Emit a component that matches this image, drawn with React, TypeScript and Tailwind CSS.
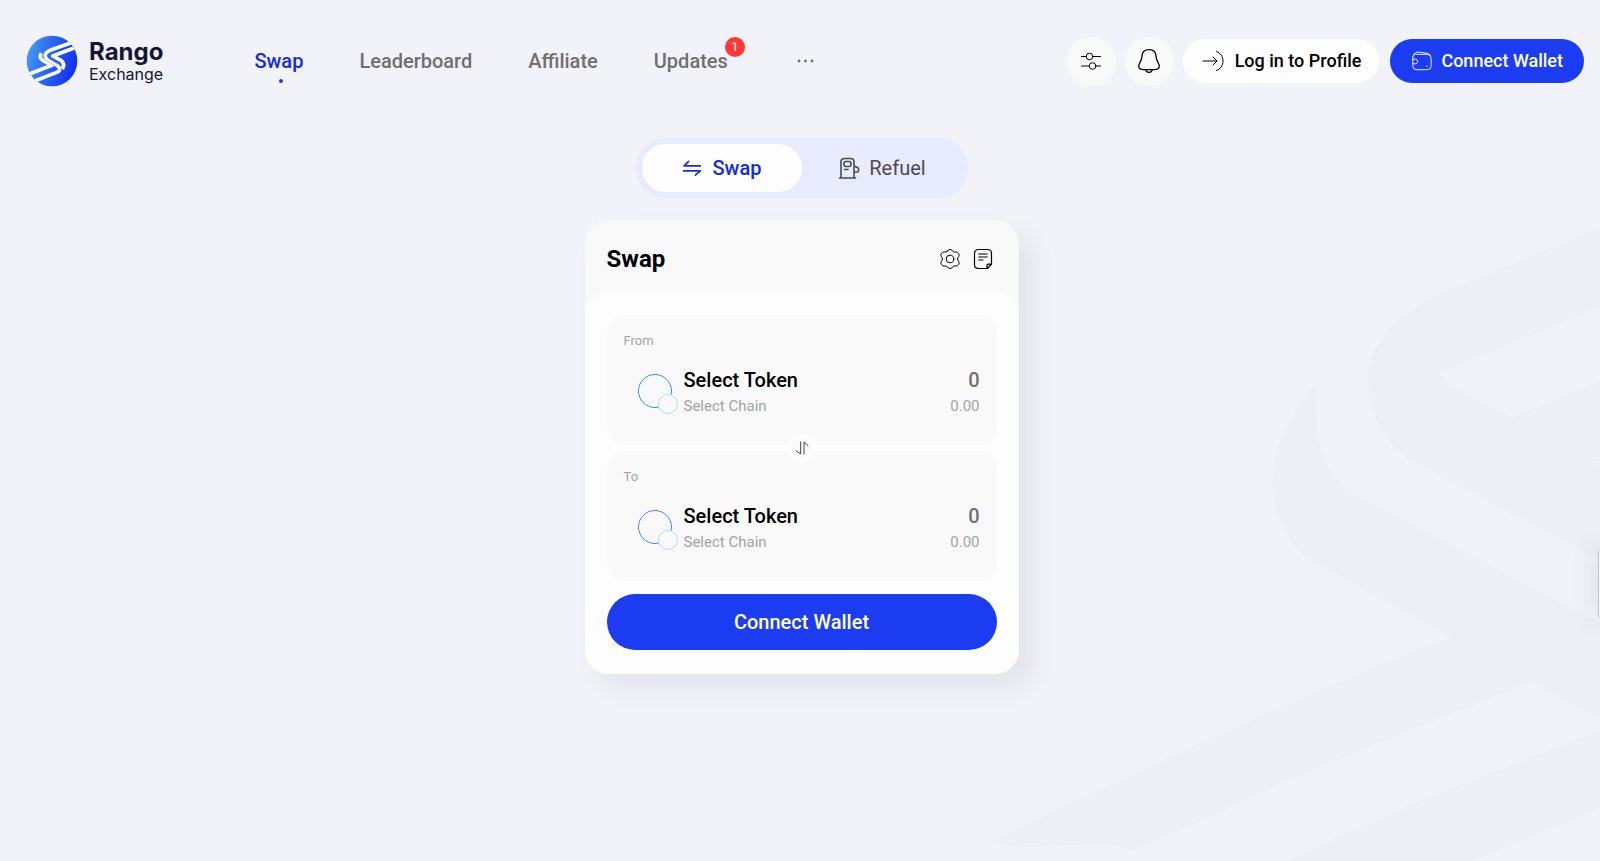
import { useState } from 'react';
import type { ReactNode } from 'react';

interface TokenPanelProps {
  id: string;
  label: string;
  amount: string;
  onAmountChange?: (value: string) => void;
}

const navLinks = [
  { id: 'swap', name: 'Swap', active: true },
  { id: 'leaderboard', name: 'Leaderboard' },
  { id: 'affiliate', name: 'Affiliate' },
  { id: 'updates', name: 'Updates', badge: 1 },
];

function Icon({ size = 24, width = 1, children }: { size?: number; width?: number; children: ReactNode }) {
  return (
    <svg
      width={size}
      height={size}
      viewBox="0 0 24 24"
      fill="none"
      stroke="currentColor"
      strokeWidth={width}
      strokeLinecap="round"
      strokeLinejoin="round"
      aria-hidden="true"
      className="shrink-0"
    >
      {children}
    </svg>
  );
}

function LogoMark() {
  return (
    <svg width="52" height="52" viewBox="0 0 156 156" aria-hidden="true">
      <defs>
        <linearGradient id="logo-fill" x1="0" y1="0" x2="1" y2="0.25">
          <stop offset="0" stopColor="#4aa5f7" />
          <stop offset="0.5" stopColor="#2a68f5" />
          <stop offset="1" stopColor="#1436f0" />
        </linearGradient>
        <linearGradient id="logo-fold" x1="0" y1="0" x2="1" y2="1">
          <stop offset="0" stopColor="#dfe5f0" />
          <stop offset="0.35" stopColor="#ffffff" />
          <stop offset="1" stopColor="#ffffff" />
        </linearGradient>
        <clipPath id="logo-clip">
          <circle cx="78" cy="78" r="76" />
        </clipPath>
      </defs>
      <circle cx="78" cy="78" r="76" fill="url(#logo-fill)" />
      <g clipPath="url(#logo-clip)" fill="none" strokeLinejoin="round">
        <path d="M10 117 70 94 78 91 50 76Q38 68 46 55" stroke="#ffffff" strokeWidth="11" />
        <path d="M146 38 88 60 80 63 106 77Q118 86 109 102" stroke="#ffffff" strokeWidth="11" />
        <path d="M136 23 74 45Q52 54 59 69Q62 74 70 79L95 93Q106 102 98 109L90 113 26 138" stroke="url(#logo-fold)" strokeWidth="11" />
        <path d="M54 50Q48 62 56 73L92 95" stroke="#8ea3cc" strokeWidth="2" />
        <path d="M66 69 100 88Q110 97 103 108" stroke="#8ea3cc" strokeWidth="2" />
      </g>
    </svg>
  );
}

function Watermark() {
  return (
    <svg
      width="640"
      height="661"
      viewBox="0 0 640 661"
      fill="#eeeff5"
      aria-hidden="true"
      className="pointer-events-none absolute right-0 bottom-0"
    >
      <path
        fillRule="evenodd"
        d="M640 28 486 91C435 112 408 146 408 181C408 215 428 248 457 264L640 360ZM640 107 483 171Q478 173 482 177Q487 183 497 188L551 218 640 181ZM640 260 633 262 640 266Z"
      />
      <path d="M357 183C330 212 313 247 313 283C313 318 330 349 359 365L490 437C400 472 320 507 245 541L32 640Q40 647 61 647C90 647 115 644 143 644Q165 645 171 652C245 619 305 590 367 564Q470 522 571 482L640 520V423L392 292C362 274 353 240 357 183Z" />
      <path d="M640 530 465 599Q395 629 326 661H512L640 608Z" />
    </svg>
  );
}

function TokenPanel({ id, label, amount, onAmountChange }: TokenPanelProps) {
  return (
    <div className="h-[130px] rounded-[18px] bg-[#f9f9f9] px-[17px] pt-4">
      <label htmlFor={id} className="block text-[13px] leading-5 text-[#a3a3a3]">
        {label}
      </label>
      <div className="mt-[13px] flex items-start justify-between">
        <button type="button" className="flex items-start gap-3 pl-[14px] text-left">
          <span className="relative mt-[10px] block size-[34px] rounded-full border border-[#3a8ff5]">
            <span className="absolute -right-[7px] -bottom-[7px] size-5 rounded-full border border-[#b9dafc] bg-[#f9f9f9]" />
          </span>
          <span className="block">
            <span className="block text-xl leading-8 font-medium text-black">Select Token</span>
            <span className="block text-[15px] leading-5 text-[#a3a3a3]">Select Chain</span>
          </span>
        </button>
        <div className="text-right">
          <input
            id={id}
            value={amount}
            readOnly={!onAmountChange}
            onChange={(e) => onAmountChange?.(e.target.value)}
            className="block h-8 w-24 bg-transparent text-right text-xl font-medium text-[#707070] outline-none"
          />
          <span className="block text-[15px] leading-5 text-[#a3a3a3]">0.00</span>
        </div>
      </div>
    </div>
  );
}

export default function App() {
  const [mode, setMode] = useState<'swap' | 'refuel'>('swap');
  const [amount, setAmount] = useState('0');

  return (
    <div className="relative min-h-screen overflow-hidden bg-[#f1f3f9] font-['Roboto',sans-serif] text-black">
      <Watermark />

      <header className="relative flex items-center justify-between pt-[35px] pr-4 pl-[26px]">
        <div className="flex items-center">
          <a href="#home" className="flex items-center gap-[11px] font-['Inter',sans-serif] text-[#15153a]">
            <LogoMark />
            <span className="block">
              <span className="block text-2xl leading-[26px] font-bold">Rango</span>
              <span className="block text-base leading-[18px]">Exchange</span>
            </span>
          </a>
          <nav className="ml-[91px] flex items-center gap-14 text-xl leading-6 font-medium">
            {navLinks.map((link) => (
              <a
                key={link.id}
                href={`#${link.id}`}
                className={link.active ? 'relative text-[#1229ee]' : 'relative text-[#6f6f6f]'}
              >
                {link.name}
                {link.active && (
                  <span className="absolute top-[30px] left-1/2 size-1 rounded-full bg-[#1c3af0]" />
                )}
                {link.badge && (
                  <span className="absolute -top-3 -right-[17px] size-5 rounded-full bg-[#ff3838] text-center text-xs leading-5 font-normal text-white">
                    {link.badge}
                  </span>
                )}
              </a>
            ))}
            <button type="button" aria-label="More" className="ml-3 text-[#6f6f6f]">
              <svg width="20" height="20" viewBox="0 0 20 20" fill="currentColor" aria-hidden="true">
                <circle cx="3" cy="10" r="1.4" />
                <circle cx="9.5" cy="10" r="1.4" />
                <circle cx="16" cy="10" r="1.4" />
              </svg>
            </button>
          </nav>
        </div>

        <div className="flex items-center gap-[9px] text-lg font-medium">
          <button type="button" aria-label="Preferences" className="flex size-[49px] items-center justify-center rounded-full bg-[#f9f9f9]">
            <Icon>
              <path d="M2.5 7.5H7M14 7.5h7.5M2.5 17H10M17 17h4.5" />
              <circle cx="10.5" cy="7.5" r="3.3" />
              <circle cx="13.5" cy="17" r="3.3" />
            </Icon>
          </button>
          <button type="button" aria-label="Notifications" className="flex size-[49px] items-center justify-center rounded-full bg-[#f9f9f9]">
            <Icon size={26} width={1.2}>
              <path d="M12 1.5C8 1.5 5.7 4 5.5 7.5C5.3 10.5 4.9 11.5 3.6 13.5C1.3 17 2.5 20 6.5 20H17.5C21.5 20 22.7 17 20.4 13.5C19.1 11.5 18.7 10.5 18.5 7.5C18.3 4 16 1.5 12 1.5Z" />
              <path d="M9 20.2Q9.5 22.5 12 22.5T15 20.2" />
            </Icon>
          </button>
          <button type="button" className="flex h-11 items-center gap-2.5 rounded-full bg-[#fdfdfd] px-[18px]">
            <Icon>
              <path d="M2 12H16M12 8l4 4-4 4M15.5 2.5C19.5 4 22 7.5 22 12S19.5 20 15.5 21.5" />
            </Icon>
            Log in to Profile
          </button>
          <button type="button" className="ml-0.5 flex h-11 items-center gap-2 rounded-full bg-[#1c3cf1] px-[21px] text-white">
            <Icon size={22}>
              <path d="M2 7.5V17.5Q2 21.5 6 21.5H18Q22 21.5 22 17.5V9Q22 5 18 4.8L5 4.5Q2 4.5 2 7.5M3 4.7Q4.5 1.8 8 2.2L18 3.6Q20.5 4 20.7 6M2 10H5Q7.3 10.2 7.3 12.5T5 15H2M17 17.5h.8" />
            </Icon>
            Connect Wallet
          </button>
        </div>
      </header>

      <main className="relative mt-[51px] flex flex-col items-center pl-[3px]">
        <div className="flex h-[60px] rounded-full bg-[#e8eafd] p-1.5 text-xl">
          <button
            type="button"
            aria-pressed={mode === 'swap'}
            onClick={() => setMode('swap')}
            className="flex w-40 items-center justify-center gap-[11px] rounded-full bg-[#fdfdfd] font-medium text-[#1229ee]"
          >
            <Icon size={20} width={2}>
              <path d="M22 9.5H2.5L8 4M2 15.5H22L16 20.5" />
            </Icon>
            Swap
          </button>
          <button
            type="button"
            aria-pressed={mode === 'refuel'}
            onClick={() => setMode('refuel')}
            className="flex w-40 items-center justify-center gap-2 text-[#4a4a50]"
          >
            <Icon width={1.6}>
              <path d="M4 22V6Q4 2.5 7.500 2.500H13.500Q17 2.500 17 6V22M2.500 22H18.500M17 10l3.500 1.500Q21.500 12 21.500 13V15Q21.500 16 20.500 16H17M7.500 13.500H11" />
              <rect x="7" y="5.500" width="7" height="5" rx="2" />
            </Icon>
            Refuel
          </button>
        </div>

        <section className="mt-[22px] w-full max-w-[434px] rounded-[24px] bg-[#f9f9f9] shadow-[14px_14px_24px_rgba(60,60,75,0.08)]">
          <div className="flex h-[72px] items-center justify-between pt-1.5 pr-6 pl-[22px]">
            <h1 className="text-2xl font-bold">Swap</h1>
            <div className="flex gap-[9px]">
              <button type="button" aria-label="Settings">
                <Icon>
                  <path d="M9.300 4.200Q10 2.500 12 2.500T14.700 4.200Q15.800 5.500 17.500 5Q19.500 4.600 20.600 6.500T20.700 9.500Q19.600 10.800 19.600 12T20.700 14.500Q21.700 15.600 20.600 17.500T17.500 19Q15.800 18.500 14.700 19.800Q14 21.500 12 21.500T9.300 19.800Q8.200 18.500 6.500 19Q4.500 19.400 3.400 17.500T3.300 14.500Q4.400 13.200 4.400 12T3.300 9.500Q2.300 8.400 3.400 6.500T6.500 5Q8.200 5.500 9.300 4.200Z" />
                  <circle cx="12" cy="12" r="3.800" />
                </Icon>
              </button>
              <button type="button" aria-label="History">
                <Icon width={1.2}>
                  <path d="M7.500 2.500H16.500Q20.500 2.500 20.500 6.500V17L16.500 21.500H7.500Q3.500 21.500 3.500 17.500V6.500Q3.500 2.500 7.500 2.500ZM16 21.500V18.500Q16 17.200 17.300 17.200H20.500M7.800 7H16.200M7.800 10H16.200M7.800 13H12" />
                </Icon>
              </button>
            </div>
          </div>

          <div className="rounded-[24px] bg-[#fdfdfd] px-[22px] pt-[23px] pb-6">
            <div className="relative flex flex-col gap-1.5">
              <TokenPanel id="from-amount" label="From" amount={amount} onAmountChange={setAmount} />
              <TokenPanel id="to-amount" label="To" amount="0" />
              <button
                type="button"
                aria-label="Switch tokens"
                className="absolute top-1/2 left-1/2 flex size-7 -translate-x-1/2 -translate-y-1/2 items-center justify-center rounded-full border-4 border-[#fdfdfd] bg-[#f9f9f9] text-[#444444]"
              >
                <Icon size={16} width={1.5}>
                  <path d="M10 3V21L3.500 16.500M15 21V3L21 8.500" />
                </Icon>
              </button>
            </div>
            <button type="button" className="mt-[13px] h-14 w-full rounded-full bg-[#1c3cf1] text-xl font-medium text-white">
              Connect Wallet
            </button>
          </div>
        </section>
      </main>

      <button
        type="button"
        aria-label="Open side panel"
        className="absolute top-[548px] -right-[22px] h-[72px] w-6 rounded-md border border-[#c4c4cb] bg-[#f6f6f9] shadow-[0_0_30px_rgba(40,40,60,0.12)]"
      />
    </div>
  );
}
